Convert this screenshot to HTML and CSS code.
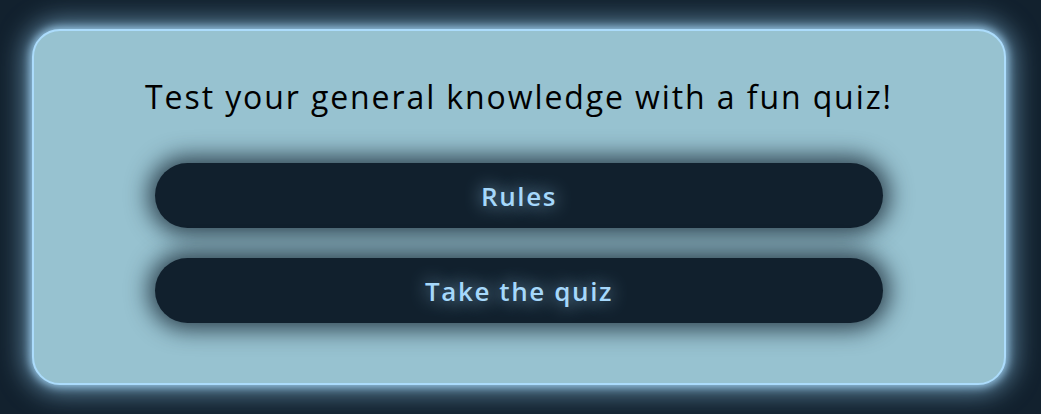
FILE: index.html
```html
<!DOCTYPE html>
<html lang="en">
<head>
<meta charset="utf-8">
<title>Quiz</title>
<link rel="stylesheet" href="styles.css">
</head>
<body>
<main class="card">
  <p class="intro">Test your general knowledge with a fun quiz!</p>
  <div class="actions">
    <button class="btn">Rules</button>
    <button class="btn">Take the quiz</button>
  </div>
</main>
</body>
</html>
```
FILE: styles.css
```css
html, body {
  margin: 0;
  height: 100%;
}
body {
  background: #12212e;
  padding: 29px 0 0 32px;
  box-sizing: border-box;
  font-family: "Open Sans", "DejaVu Sans", sans-serif;
}
.card {
  box-sizing: border-box;
  width: 974px;
  height: 356px;
  background: #97c2d0;
  border: 2px solid #acdcfc;
  border-radius: 28px;
  box-shadow: 0 0 8px 2px rgba(170, 220, 252, 0.8), 0 0 26px 8px rgba(150, 205, 240, 0.6);
  display: flex;
  flex-direction: column;
  align-items: center;
  padding-top: 46px;
}
.intro {
  margin: 0;
  font-size: 32px;
  line-height: 40px;
  color: #000;
  font-weight: 400;
  letter-spacing: 1.9px;
}
.actions {
  margin-top: 46px;
  display: flex;
  flex-direction: column;
  gap: 30px;
}
.btn {
  width: 728px;
  height: 65px;
  border: none;
  border-radius: 33px;
  background: #11202d;
  color: #a6d8fb;
  font-family: inherit;
  font-size: 26px;
  font-weight: 600;
  letter-spacing: 1.6px;
  box-shadow: 0 0 22px 7px rgba(16, 30, 42, 0.75);
  text-shadow: 0 0 18px rgba(163, 214, 250, 0.8);
  cursor: pointer;
}
```
